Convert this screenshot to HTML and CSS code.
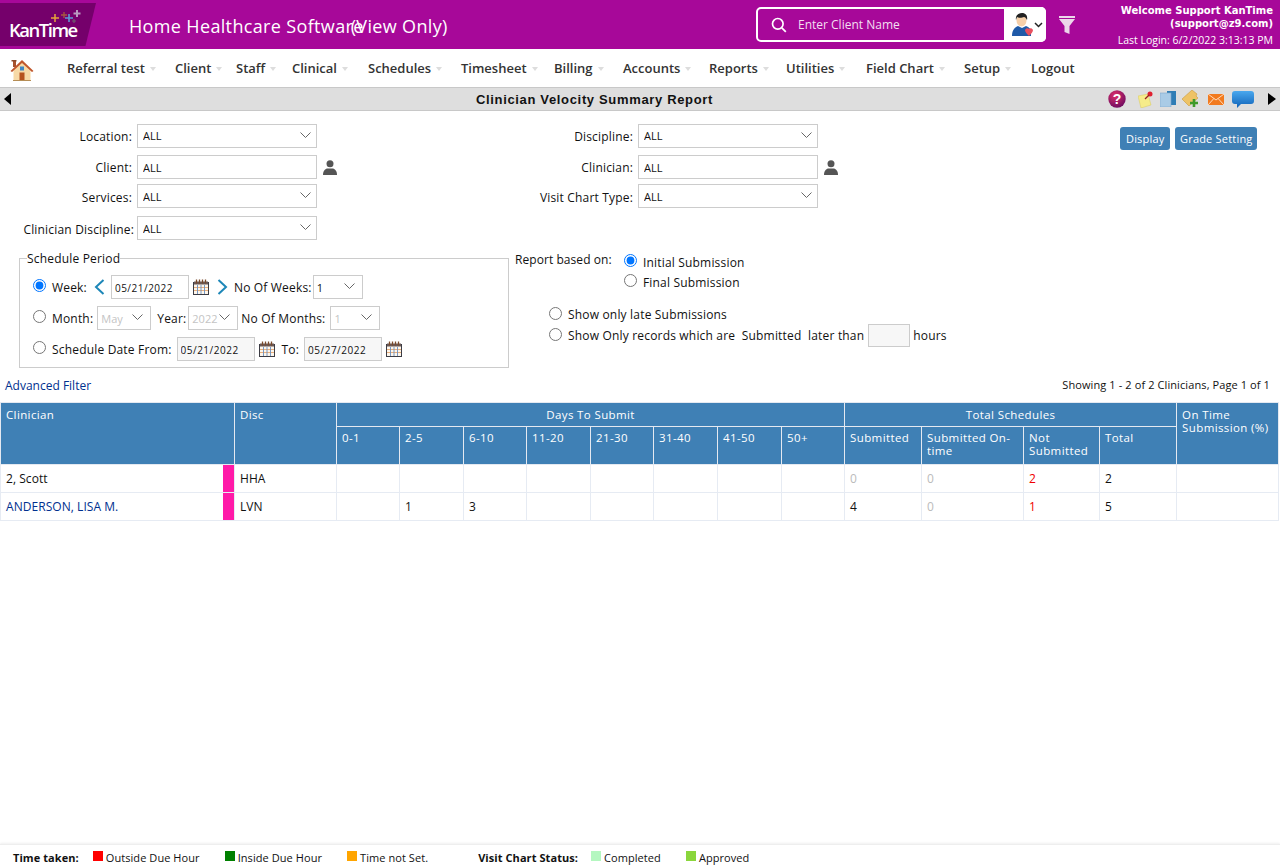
FILE: index.html
```html
<!DOCTYPE html>
<html lang="en">
<head>
<meta charset="utf-8">
<title>Clinician Velocity Summary Report</title>
<link rel="stylesheet" href="styles.css">
</head>
<body>
<header class="topbar">
  <div class="logo">
    <span class="logo-text">KanTime</span>
    <svg class="logo-stars" width="40" height="20" viewBox="0 0 40 20">
      <path d="M9 6v8M5 10h8" stroke="#e8a33a" stroke-width="1.500"/>
      <path d="M18 4v6M15 7h6" stroke="#a85a3f" stroke-width="1.300"/>
      <path d="M23 6v8M19 10h8" stroke="#5f9bd6" stroke-width="1.600"/>
      <path d="M31 2v7M27.500 5.500h7" stroke="#b99ac0" stroke-width="2"/>
      <path d="M28 11v4M26 13h4" stroke="#6f5a6e" stroke-width="1.200"/>
    </svg>
  </div>
  <div class="app-title"><span>Home Healthcare Software</span><span class="view-only">(View Only)</span></div>
  <div class="search">
    <svg class="search-icon" width="16" height="16" viewBox="0 0 16 16"><circle cx="6.800" cy="6.800" r="5.300" fill="none" stroke="#fff" stroke-width="1.700"/><path d="M10.800 10.800l4 4" stroke="#fff" stroke-width="1.800"/></svg>
    <span class="search-text">Enter Client Name</span>
    <div class="search-type">
      <svg width="22" height="24" viewBox="0 0 22 24">
        <path d="M1 23c0-6 3-9 6-10l4 2 4-2c3 1 5 3 5 6v4z" fill="#1f5aa8"/>
        <ellipse cx="10.500" cy="7.500" rx="5" ry="6" fill="#f6cfa9"/>
        <path d="M5 7C4 2 8 0 11 0s6 2 5 7c-1-2-2-3-3-3-2 1-6 1-7 0z" fill="#222"/>
        <path d="M14 17c1-2 3-2 4-1 1-1 3-1 4 1 0 2-2 4-4 6-2-2-4-4-4-6z" fill="#e8505f"/>
      </svg>
      <svg width="9" height="6" viewBox="0 0 9 6"><path d="M1 1l3.500 3.500L8 1" fill="none" stroke="#222" stroke-width="1.500"/></svg>
    </div>
  </div>
  <svg class="funnel" width="16" height="18" viewBox="0 0 16 18"><path d="M0 0h16v2H0z" fill="#ecd6ea"/><path d="M0 3h16l-5.500 7v8l-5-2v-6z" fill="#ecd6ea"/></svg>
  <div class="welcome">
    <strong>Welcome Support KanTime<br>(support@z9.com)</strong>
    <span class="last-login">Last Login: 6/2/2022 3:13:13 PM</span>
  </div>
</header>

<nav class="menu">
  <svg class="home" width="24" height="22" viewBox="0 0 24 22">
    <path d="M3 2h3v6H3z" fill="#a8512c"/>
    <path d="M1.500 1h5v1.500h-5z" fill="#8a4a2a"/>
    <path d="M3.500 10L12 3l8.500 7v11.500h-17z" fill="#f7d9a6"/>
    <path d="M0.500 12L12 1l11.500 11-1.500 1L12 4 2 13z" fill="#c0562c"/>
    <rect x="9.500" y="13.500" width="5" height="8" fill="#b5521e"/>
    <rect x="10" y="7.500" width="4" height="4" fill="#3f86c4"/>
    <path d="M3 21.500h18" stroke="#b58d55"/>
  </svg>
  <ul class="menu-list">
    <li class="has-sub">Referral test</li>
    <li class="has-sub">Client</li>
    <li class="has-sub">Staff</li>
    <li class="has-sub">Clinical</li>
    <li class="has-sub">Schedules</li>
    <li class="has-sub">Timesheet</li>
    <li class="has-sub">Billing</li>
    <li class="has-sub">Accounts</li>
    <li class="has-sub">Reports</li>
    <li class="has-sub">Utilities</li>
    <li class="has-sub">Field Chart</li>
    <li class="has-sub">Setup</li>
    <li>Logout</li>
  </ul>
</nav>

<div class="titlebar">
  <span class="tri tri-left"></span>
  <h1 class="report-title">Clinician Velocity Summary Report</h1>
  <div class="tools">
    <svg class="tool-help" width="18" height="18" viewBox="0 0 18 18"><defs><radialGradient id="hg" cx="40%" cy="30%" r="75%"><stop offset="0" stop-color="#e0306a"/><stop offset="1" stop-color="#6a0a60"/></radialGradient></defs><circle cx="9" cy="9" r="8.700" fill="url(#hg)"/><text x="9" y="14" text-anchor="middle" class="help-mark">?</text></svg>
    <svg class="tool-note" width="16" height="17" viewBox="0 0 16 17"><path d="M0 5l10-2 3 11-10 3z" fill="#f6ec8a" stroke="#d8c860" stroke-width=".5"/><circle cx="12" cy="3" r="2.500" fill="#e02030"/><path d="M11 4l-4 4" stroke="#922" stroke-width="1.200"/></svg>
    <svg class="tool-copy" width="16" height="16" viewBox="0 0 16 16"><rect x="7" y="0" width="9" height="14" fill="#2f7db5"/><rect x="0" y="2" width="11" height="14" fill="#a9cbe6"/><rect x="0" y="2" width="11" height="14" fill="none" stroke="#7fa9cc" stroke-width=".6"/></svg>
    <svg class="tool-ticket" width="19" height="18" viewBox="0 0 19 18"><path d="M0 9l10-9 5 4-1 2 2 2-9 8z" fill="#eec366" stroke="#c99a3e" stroke-width=".6"/><path d="M12 9v8M8 13h8" stroke="#3f9a2a" stroke-width="2.600"/></svg>
    <svg class="tool-mail" width="16" height="11" viewBox="0 0 15 11" preserveAspectRatio="none"><rect width="15" height="11" fill="#f27a1e"/><path d="M0 0l7.500 6L15 0M0 11l5.500-6.500M15 11L9.500 4.500" fill="none" stroke="#ffe3c8" stroke-width=".9"/></svg>
    <svg class="tool-chat" width="22" height="17" viewBox="0 0 22 17"><defs><linearGradient id="cg" x1="0" y1="0" x2="0" y2="1"><stop offset="0" stop-color="#4aa8ee"/><stop offset="1" stop-color="#0f62b8"/></linearGradient></defs><path d="M3 0h16a3 3 0 0 1 3 3v7a3 3 0 0 1-3 3H9l-4 4v-4H3a3 3 0 0 1-3-3V3a3 3 0 0 1 3-3z" fill="url(#cg)"/></svg>
    <span class="tri tri-right"></span>
  </div>
</div>

<main class="content">
  <section class="filters">
    <div class="field-col">
      <label class="lbl">Location:</label><select class="ctl"><option>ALL</option></select>
      <label class="lbl">Client:</label><div class="with-icon"><input class="ctl" value="ALL"><svg class="person" width="14" height="15" viewBox="0 0 14 15"><circle cx="7" cy="3.800" r="3.500" fill="#555"/><path d="M0 15c0-4 2-6 4-6.500h6c2 .5 4 2.500 4 6.500z" fill="#555"/></svg></div>
      <label class="lbl">Services:</label><select class="ctl"><option>ALL</option></select>
      <label class="lbl lbl-wide">Clinician Discipline:</label><select class="ctl"><option>ALL</option></select>
    </div>
    <div class="field-col">
      <label class="lbl">Discipline:</label><select class="ctl"><option>ALL</option></select>
      <label class="lbl">Clinician:</label><div class="with-icon"><input class="ctl" value="ALL"><svg class="person" width="14" height="15" viewBox="0 0 14 15"><circle cx="7" cy="3.800" r="3.500" fill="#555"/><path d="M0 15c0-4 2-6 4-6.500h6c2 .5 4 2.500 4 6.500z" fill="#555"/></svg></div>
      <label class="lbl">Visit Chart Type:</label><select class="ctl"><option>ALL</option></select>
    </div>
    <div class="actions">
      <button class="btn btn-display">Display</button>
      <button class="btn btn-grade">Grade Setting</button>
    </div>
  </section>

  <section class="period-row">
    <fieldset class="period">
      <legend>Schedule Period</legend>
      <div class="p-line">
        <input type="radio" name="period" class="rad" checked>
        <span class="p-label p-week">Week:</span>
        <svg class="chev" width="11" height="16" viewBox="0 0 11 16"><path d="M9.500 1L2 8l7.500 7" fill="none" stroke="#1d87b8" stroke-width="2"/></svg>
        <input class="date" value="05/21/2022">
        <svg class="cal" width="16" height="16" viewBox="0 0 16 16"><use href="#calendar"/></svg>
        <svg class="chev chev-r" width="11" height="16" viewBox="0 0 11 16"><path d="M1.500 1L9 8l-7.500 7" fill="none" stroke="#1d87b8" stroke-width="2"/></svg>
        <span class="p-label p-weeks">No Of Weeks:</span>
        <select class="small w-50 m-1"><option>1</option></select>
      </div>
      <div class="p-line">
        <input type="radio" name="period" class="rad">
        <span class="p-label">Month:</span>
        <select class="small w-54 m-4" disabled><option>May</option></select>
        <span class="p-label m-6">Year:</span>
        <select class="small w-50 m-2" disabled><option>2022</option></select>
        <span class="p-label m-3">No Of Months:</span>
        <select class="small w-50 m-5" disabled><option>1</option></select>
      </div>
      <div class="p-line">
        <input type="radio" name="period" class="rad">
        <span class="p-label">Schedule Date From:</span>
        <input class="date date-off m-5" value="05/21/2022">
        <svg class="cal" width="16" height="16" viewBox="0 0 16 16"><use href="#calendar"/></svg>
        <span class="p-label m-7">To:</span>
        <input class="date date-off m-5" value="05/27/2022">
        <svg class="cal" width="16" height="16" viewBox="0 0 16 16"><use href="#calendar"/></svg>
      </div>
    </fieldset>

    <div class="report-opts">
      <div class="based">
        <span class="based-label">Report based on:</span>
        <div class="based-list">
          <label class="opt"><input type="radio" name="based" class="rad" checked>Initial Submission</label>
          <label class="opt"><input type="radio" name="based" class="rad">Final Submission</label>
        </div>
      </div>
      <div class="late">
        <label class="opt"><input type="radio" name="late" class="rad">Show only late Submissions</label>
        <label class="opt opt-hours"><input type="radio" name="late" class="rad">Show Only records which are &nbsp;Submitted &nbsp;later than <input class="hours"> hours</label>
      </div>
    </div>
  </section>

  <div class="list-head">
    <a class="adv" href="#">Advanced Filter</a>
    <span class="count">Showing 1 - 2 of 2 Clinicians, Page 1 of 1</span>
  </div>

  <table class="grid">
    <colgroup>
      <col class="c-name"><col class="c-disc">
      <col class="c-d1"><col class="c-d2"><col class="c-d1"><col class="c-d2"><col class="c-d1"><col class="c-d2"><col class="c-d2"><col class="c-d1">
      <col class="c-sub"><col class="c-on"><col class="c-not"><col class="c-tot"><col>
    </colgroup>
    <thead>
      <tr class="h1">
        <th rowspan="2">Clinician</th>
        <th rowspan="2">Disc</th>
        <th colspan="8" class="center">Days To Submit</th>
        <th colspan="4" class="center">Total Schedules</th>
        <th rowspan="2">On Time Submission (%)</th>
      </tr>
      <tr class="h2">
        <th>0-1</th><th>2-5</th><th>6-10</th><th>11-20</th><th>21-30</th><th>31-40</th><th>41-50</th><th>50+</th>
        <th>Submitted</th><th>Submitted On-time</th><th>Not Submitted</th><th>Total</th>
      </tr>
    </thead>
    <tbody>
      <tr>
        <td class="name">2, Scott</td><td>HHA</td>
        <td></td><td></td><td></td><td></td><td></td><td></td><td></td><td></td>
        <td class="zero">0</td><td class="zero">0</td><td class="red">2</td><td>2</td><td></td>
      </tr>
      <tr>
        <td class="name link">ANDERSON, LISA M.</td><td>LVN</td>
        <td></td><td>1</td><td>3</td><td></td><td></td><td></td><td></td><td></td>
        <td>4</td><td class="zero">0</td><td class="red">1</td><td>5</td><td></td>
      </tr>
    </tbody>
  </table>
</main>

<footer class="legend">
  <b class="lg-title">Time taken:</b>
  <span class="lg-item lg-first"><i class="sw sw-red"></i>Outside Due Hour</span>
  <span class="lg-item"><i class="sw sw-green"></i>Inside Due Hour</span>
  <span class="lg-item"><i class="sw sw-orange"></i>Time not Set.</span>
  <b class="lg-title lg-second">Visit Chart Status:</b>
  <span class="lg-item lg-tight"><i class="sw sw-mint"></i>Completed</span>
  <span class="lg-item"><i class="sw sw-lime"></i>Approved</span>
</footer>

<svg class="defs" width="0" height="0">
  <symbol id="calendar" viewBox="0 0 16 16">
    <rect x=".5" y="3.500" width="15" height="12" fill="#fdf6ec" stroke="#3c3c44"/>
    <rect x="1" y="2.500" width="14" height="3" fill="#6a5a58"/>
    <path d="M3.500 0.500v4M6.500 0.500v4M9.500 0.500v4M12.500 0.500v4" stroke="#7a4a2a" stroke-width="1.300"/>
    <path d="M1 8.500h14M1 11.500h14" stroke="#e8a870" stroke-width=".9"/>
    <path d="M4.500 6v9M8 6v9M11.500 6v9" stroke="#6a8ec0" stroke-width=".9"/>
  </symbol>
</svg>
</body>
</html>
```
FILE: styles.css
```css
* { box-sizing: border-box; }
html, body { height: 100%; }
body {
  margin: 0;
  height: 868px;
  overflow: hidden;
  display: flex;
  flex-direction: column;
  background: #fff;
  color: #111;
  font: 12px "Open Sans", "Noto Sans", sans-serif;
}
.defs { display: block; height: 0; }

/* top bar */
.topbar {
  height: 49px;
  flex: none;
  display: flex;
  align-items: flex-start;
  background: #a70899;
  color: #fff;
}
.logo {
  width: 96px;
  height: 43px;
  margin-top: 3px;
  padding: 15px 0 0 9px;
  background: #75006b;
  clip-path: polygon(0 0, 100% 0, 89% 100%, 0 100%);
  display: flex;
  position: relative;
}
.logo-text { font-size: 18.500px; line-height: 24px; letter-spacing: -1.500px; font-weight: 600; }
.logo-stars { position: absolute; left: 46px; top: 5px; }
.app-title {
  margin: 13px 0 0 33px;
  width: 627px;
  font-size: 18px;
  line-height: 26px;
  letter-spacing: .35px;
  display: flex;
}
.view-only { margin-left: -13px; }
.search {
  width: 290px;
  height: 35px;
  margin-top: 7px;
  border: 2px solid #fff;
  border-radius: 5px;
  display: flex;
  align-items: center;
}
.search-icon { margin-left: 13px; }
.search-text { margin-left: 11px; font-size: 12px; flex: 1; color: #f3dff1; }
.search-type {
  width: 42px;
  height: 35px;
  margin-right: -2px;
  background: #fff;
  border-radius: 0 5px 5px 0;
  display: flex;
  align-items: center;
  padding-left: 7px;
  gap: 1px;
}
.funnel { margin: 16px 0 0 13px; }
.welcome {
  margin: 4px 7px 0 auto;
  text-align: right;
  font-size: 11px;
  line-height: 13px;
}
.welcome strong { font: bold 10px/13px "DejaVu Sans", sans-serif; display: block; }
.last-login { display: block; margin-top: 3px; font-size: 10.500px; line-height: 14px; }

/* menu */
.menu {
  height: 38px;
  flex: none;
  display: flex;
  align-items: center;
  padding-left: 10px;
}
.home { margin-top: 3px; }
.menu-list {
  list-style: none;
  margin: 0 0 0 33px;
  padding: 0;
  display: grid;
  grid-template-columns: 108px 61px 56px 76px 93px 93px 69px 86px 77px 80px 98px 67px auto;
  font-size: 13px;
  font-weight: 600;
  color: #333;
}
.has-sub::after {
  content: "";
  display: inline-block;
  margin-left: 5px;
  border: 3.500px solid transparent;
  border-top: 4px solid #ddd;
  border-bottom: 0;
  vertical-align: 2px;
}

/* title bar */
.titlebar {
  height: 24px;
  flex: none;
  display: flex;
  align-items: center;
  padding: 0 4px;
  background: #dedede;
  border-top: 1px solid #c8c8c8;
  border-bottom: 1px solid #c8c8c8;
  position: relative;
}
.tri { width: 0; height: 0; border: 6px solid transparent; border-left-width: 0; border-right: 7px solid #000; }
.tri-right { border-right-width: 0; border-left: 8px solid #000; border-right-color: transparent; margin-left: 14px; }
.report-title {
  flex: 1;
  margin: 0;
  padding-right: 98px;
  text-align: center;
  font: bold 13px "Liberation Sans", Arial, sans-serif;
  letter-spacing: .66px;
  color: #111;
}
.tools { position: absolute; right: 4px; top: 2px; height: 18px; display: flex; align-items: center; }
.help-mark { font: bold 14px "Liberation Sans", sans-serif; fill: #fff; }
.tool-note { margin-left: 12px; }
.tool-copy { margin-left: 6px; }
.tool-ticket { margin-left: 6px; }
.tool-mail { margin-left: 7px; }
.tool-chat { margin-left: 8px; }

/* filters */
.content { flex: 1; display: flex; flex-direction: column; }
.filters, .period-row { letter-spacing: .18px; }
.filters { display: flex; padding-top: 13px; height: 147px; }
.field-col {
  width: 501px;
  display: grid;
  grid-template-columns: 132px 180px 1fr;
  grid-template-rows: 24px 24px 24px 24px;
  column-gap: 5px;
  row-gap: 7px;
  align-content: start;
}
.field-col > :nth-child(even) { grid-column: 2; }
.field-col > :nth-child(5), .field-col > :nth-child(6) { margin-top: -2px; }
.field-col > :nth-child(7), .field-col > :nth-child(8) { margin-top: -1px; }
.lbl { grid-column: 1; text-align: right; line-height: 26px; white-space: nowrap; }
.field-col > :nth-child(5), .field-col > :nth-child(7) { line-height: 28px; }
.lbl-wide { margin-left: -10px; margin-right: -2px; }
.ctl {
  width: 180px;
  height: 24px;
  padding: 0 5px;
  border: 1px solid #ccc;
  border-radius: 0;
  background: #fff;
  color: #111;
  font: 11px "Open Sans", sans-serif;
}
select.ctl, .small {
  appearance: none;
  background-image: url("data:image/svg+xml,%3Csvg xmlns='http://www.w3.org/2000/svg' width='11' height='6'%3E%3Cpath d='M.5.5l5 5 5-5' fill='none' stroke='%23666'/%3E%3C/svg%3E");
  background-repeat: no-repeat;
}
select.ctl { background-position: right 5px top 7px; padding-bottom: 2px; }
.field-col > select:nth-child(6), .field-col > select:nth-child(8) { padding-bottom: 0; }
.with-icon { display: flex; align-items: center; width: 210px; }
.person { margin-left: 6px; flex: none; }
.actions { margin-left: auto; padding: 3px 23px 0 0; display: flex; gap: 5px; align-items: flex-start; }
.btn {
  height: 23px;
  border: 0;
  border-radius: 3px;
  background: #3f80b5;
  color: #fff;
  font: 11px "Open Sans", sans-serif;
  letter-spacing: .2px;
}
.btn-display { padding: 0 6px; }
.btn-grade { padding: 0 4.500px; }

/* schedule period */
.period-row { display: flex; height: 118px; }
.period {
  width: 490px;
  height: 118px;
  margin: -8px 0 0 19px;
  padding: 9px 0 0 13px;
  border: 1px solid #ccc;
  min-width: 0;
}
.period legend { padding: 2px 0 0; margin-left: -6px; font-size: 12px; line-height: 14px; }
.p-line { height: 24px; display: flex; align-items: center; margin-bottom: 7px; }
.rad { width: 13px; height: 13px; margin: -3px 6px 0 0; flex: none; }
.p-label { white-space: nowrap; }
.p-week { margin-right: 7px; }
.chev { flex: none; }
.date {
  width: 78px;
  height: 24px;
  margin-left: 6px;
  padding: 1px 3px 0;
  border: 1px solid #ccc;
  color: #111;
  font: 10px "Open Sans", sans-serif;
  letter-spacing: .5px;
}
.date-off { background: #f7f7f7; }
.cal { margin-left: 4px; flex: none; }
.chev-r { margin-left: 8px; }
.p-weeks { margin-left: 6px; }
.small {
  height: 24px;
  padding: 0 0 0 3px;
  border: 1px solid #ccc;
  border-radius: 0;
  background-color: #fff;
  background-position: right 7px top 7px;
  color: #111;
  font: 11px "Open Sans", sans-serif;
}
.small:disabled { color: #c4c4c4; opacity: 1; }
.w-50 { width: 50px; }
.w-54 { width: 54px; }
.m-1 { margin-left: 1px; }
.m-2 { margin-left: 2px; }
.m-3 { margin-left: 3px; }
.m-4 { margin-left: 4px; }
.m-5 { margin-left: 5px; }
.m-6 { margin-left: 6px; }
.m-7 { margin-left: 7px; }

.report-opts { margin-left: 6px; }
.based { display: flex; margin-top: -6px; }
.based-label { width: 109px; line-height: 16px; letter-spacing: .06px; }
.based-list { display: flex; flex-direction: column; }
.opt { display: flex; align-items: center; height: 20px; white-space: nowrap; }
.late { margin: 12px 0 0 34px; }
.late .opt { height: 21px; }
.hours {
  width: 42px;
  height: 23px;
  margin: 0 3px 0 4px;
  border: 1px solid #ccc;
  background: #f7f7f7;
}

/* list */
.list-head {
  display: flex;
  justify-content: space-between;
  padding: 0 10px 0 5px;
  height: 26px;
  line-height: 18px;
  font-size: 11px;
}
.count { letter-spacing: .1px; }
.adv { color: #00308f; text-decoration: none; font-size: 12px; line-height: 20px; }
.grid {
  width: 1279px;
  border-collapse: collapse;
  table-layout: fixed;
  font-size: 12px;
}
.c-name { width: 234px; }
.c-disc { width: 102px; }
.c-d1 { width: 63px; }
.c-d2 { width: 64px; }
.c-sub { width: 77px; }
.c-on { width: 102px; }
.c-not { width: 76px; }
.c-tot { width: 77px; }
.grid th {
  background: #3f80b5;
  color: #fff;
  font-weight: 400;
  text-align: left;
  vertical-align: top;
  padding: 5px 5px 0;
  line-height: 13px;
  border: 1px solid #e4e9f1;
  font-size: 11.500px;
  letter-spacing: .38px;
}
.grid th.center { text-align: center; }
.h1 th { height: 24px; }
.h2 th { height: 38px; padding-top: 4px; }
.grid td {
  height: 28px;
  padding: 0 5px;
  border: 1px solid #e6ebf3;
  letter-spacing: .05px;
}
.grid .name {
  background: linear-gradient(#ff1aa8, #ff1aa8) right / 11px 100% no-repeat;
}
.link { color: #00308f; }
.grid .zero { color: #bbb; }
.grid .red { color: #f00000; }

/* legend */
.legend {
  height: 24px;
  flex: none;
  display: flex;
  align-items: center;
  padding: 1px 0 0 13px;
  border-top: 1px solid #eee;
  box-shadow: 0 -1px 2px #f0f0f0;
  font-size: 11px;
  letter-spacing: .07px;
}
.lg-title { font-weight: 700; color: #111; }
.lg-item { display: flex; align-items: center; margin-left: 25px; }
.lg-first { margin-left: 14px; }
.lg-tight { margin-left: 13px; }
.lg-second { margin-left: 50px; }
.sw { width: 10px; height: 10px; margin: -3px 3px 0 0; }
.sw-red { background: #ff0000; }
.sw-green { background: #008000; }
.sw-orange { background: #ffa500; }
.sw-mint { background: #b4f7c0; }
.sw-lime { background: #8ad63c; }
```
